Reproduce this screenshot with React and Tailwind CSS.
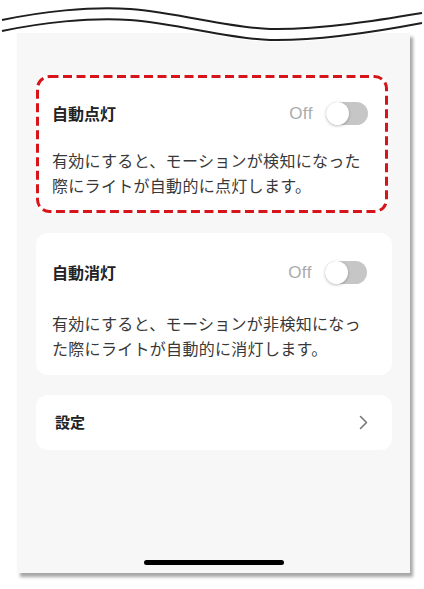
import React from "react";

const jp = { fontFamily: '"Noto Sans CJK JP", "Noto Sans", sans-serif' };

function Toggle() {
  return (
    <div className="flex items-center gap-[13px]">
      <span className="text-[17px] leading-none tracking-[0.5px] text-[#ababab]" style={{ fontFamily: '"Liberation Sans", Arial, sans-serif' }}>
        Off
      </span>
      <div className="relative h-[23px] w-[42px] rounded-full bg-[#c6c6c6]">
        <div className="absolute left-0 top-0 h-[23px] w-[23px] rounded-full bg-white shadow-[0_1px_3px_rgba(0,0,0,0.25)]" />
      </div>
    </div>
  );
}

export default function App() {
  return (
    <div className="relative h-[589px] w-[424px] overflow-hidden bg-white pl-[17px] pt-[33px]" style={jp}>
      <div className="flex h-[540px] w-[393px] flex-col bg-[#f7f7f7] px-[19px] pt-[42px] shadow-[3px_4px_3px_rgba(0,0,0,0.35)]">
        {/* Card 1 (highlighted) */}
        <div className="relative h-[138px] w-[352px] rounded-[12px] bg-white px-[16px] pt-[26px]">
          <svg className="absolute inset-0" width="352" height="138" viewBox="0 0 352 138" fill="none">
            <rect x="1.5" y="1.5" width="349" height="135" rx="12" stroke="#d7141a" strokeWidth="3" strokeDasharray="9 4.5" />
          </svg>
          <div className="flex h-[24px] items-center justify-between pr-[4px]">
            <span className="text-[16px] font-bold text-[#222]">自動点灯</span>
            <Toggle />
          </div>
          <div className="mt-[23px] text-[16px] leading-[25px] tracking-[0.3px] text-[#383838]">
            <div className="whitespace-nowrap">有効にすると、モーションが検知になった</div>
            <div className="whitespace-nowrap">際にライトが自動的に点灯します。</div>
          </div>
        </div>

        {/* Card 2 */}
        <div className="mt-[20px] h-[142px] w-[356px] rounded-[12px] bg-white px-[16px] pt-[27px]">
          <div className="flex h-[24px] items-center justify-between pr-[9px]">
            <span className="text-[16px] font-bold text-[#222]">自動消灯</span>
            <Toggle />
          </div>
          <div className="mt-[27px] text-[16px] leading-[25px] tracking-[0.3px] text-[#383838]">
            <div className="whitespace-nowrap">有効にすると、モーションが非検知になっ</div>
            <div className="whitespace-nowrap">た際にライトが自動的に消灯します。</div>
          </div>
        </div>

        {/* Card 3 */}
        <div className="mt-[20px] flex h-[55px] w-[356px] items-center justify-between rounded-[12px] bg-white pl-[19px] pr-[24px]">
          <span className="text-[15px] font-bold text-[#222]">設定</span>
          <svg width="9" height="15" viewBox="0 0 9 15" fill="none">
            <polyline points="1.5,1.5 7.5,7.5 1.5,13.5" stroke="#777" strokeWidth="1.6" strokeLinecap="round" strokeLinejoin="round" />
          </svg>
        </div>

        <div className="flex-1" />
        <div className="mx-auto mb-[8px] h-[5px] w-[140px] rounded-full bg-black" />
      </div>

      {/* wavy cut */}
      <svg className="absolute left-0 top-0" width="424" height="48" viewBox="0 0 424 48" fill="none">
        <path
          d="M0,0 L424,0 L424,25 C380,33 320,43 270,42 C230,41 180,26 130,22 C90,19 40,25 0,33 Z"
          fill="#ffffff"
        />
        <path d="M2,20 C40,12 90,6 130,9 C180,13 230,28 270,29 C320,30 380,20 422,13" stroke="#1e1e1e" strokeWidth="2" />
        <path d="M2,31 C40,23 90,17 130,20 C180,24 230,39 270,40 C320,41 380,31 422,23" stroke="#1e1e1e" strokeWidth="2" />
      </svg>
    </div>
  );
}
